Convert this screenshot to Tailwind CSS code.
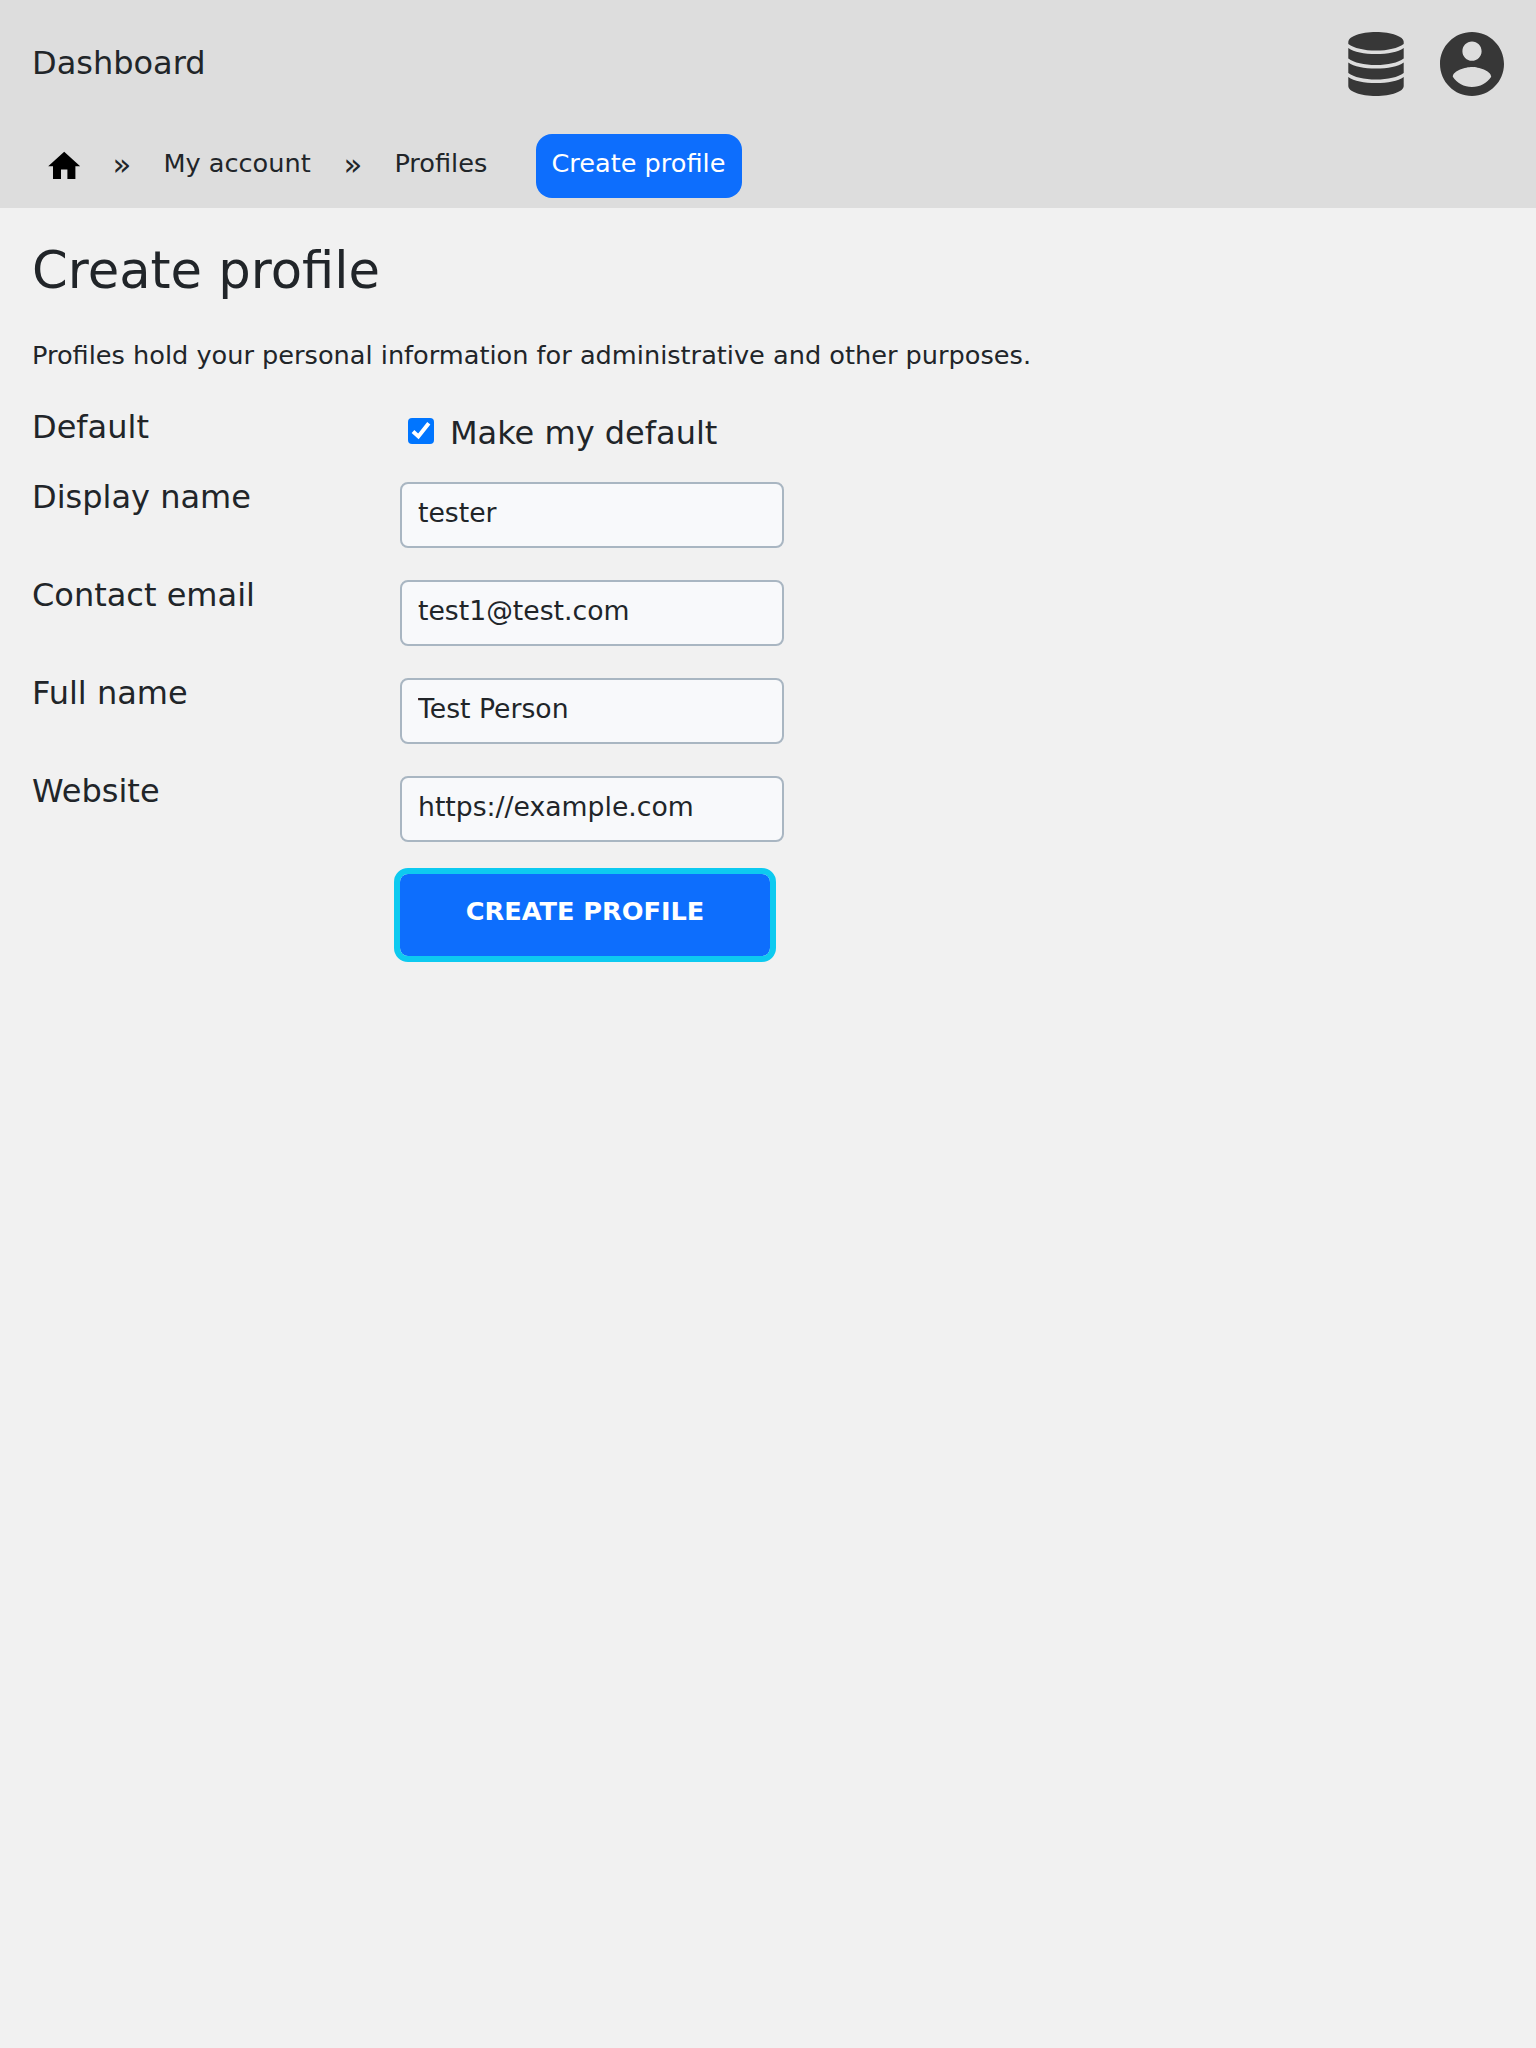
<!DOCTYPE html>
<html lang="en">
<head>
<meta charset="utf-8">
<title>Create profile</title>
<script src="https://cdn.jsdelivr.net/npm/@tailwindcss/browser@4"></script>
</head>
<body class="min-h-screen bg-[#f1f1f1] text-[#212529] font-['DejaVu_Sans',sans-serif] text-[32px] leading-[48px]">
<header class="bg-[#ddd] h-[208px]">
  <div class="flex items-center justify-between px-8 h-32">
    <a class="pb-0.5">Dashboard</a>
    <div class="flex gap-9">
      <svg class="w-14 h-16" viewBox="0 0 56 64" fill="#373737"><path d="M.3 10C.3 4.500 12.500 0 28 0s27.700 4.500 27.700 10v2C50 16.200 40 18.600 28 18.600S6 16.200.3 12z"/><path d="M.3 16C6 20 16 22 28 22s22-2 27.700-6v10.500C50 30.700 40 33 28 33S6 30.700.3 26.500z"/><path d="M.3 30.500C6 34.500 16 36.500 28 36.500s22-2 27.700-6V41C50 45.200 40 47.500 28 47.500S6 45.200.3 41z"/><path d="M.3 45C6 49 16 51 28 51s22-2 27.700-6v9c0 5.500-12.200 10-27.700 10S.3 59.500.3 54z"/></svg>
      <svg class="w-16 h-16" viewBox="2 2 20 20" fill="#373737"><path d="M12 2C6.480 2 2 6.480 2 12s4.480 10 10 10 10-4.480 10-10S17.520 2 12 2zm0 3c1.660 0 3 1.340 3 3s-1.340 3-3 3-3-1.340-3-3 1.340-3 3-3zm0 14.200c-2.500 0-4.710-1.280-6-3.220.03-1.990 4-3.080 6-3.080 1.990 0 5.970 1.090 6 3.080-1.290 1.940-3.500 3.220-6 3.220z"/></svg>
    </div>
  </div>
  <nav class="flex items-start pt-1.5 pl-[45px] text-[25.6px] leading-[38px]">
    <svg class="mt-[13px] w-[38.4px] h-[38.4px]" viewBox="0 0 24 24"><path d="M10 20v-6h4v6h5v-8h3L12 3 2 12h3v8z"/></svg>
    <span class="mt-3 ml-[29px] w-[51px] text-[30.700px]">»</span>
    <a class="mt-2.5 w-[180px]">My account</a>
    <span class="mt-3 w-[51px] text-[30.700px]">»</span>
    <a class="mt-2.5 w-[142px]">Profiles</a>
    <a class="h-16 w-[206px] rounded-2xl bg-[#0d6efd] px-[15px] pt-2.5 text-white whitespace-nowrap">Create profile</a>
  </nav>
</header>
<main class="px-8 pt-[31px]">
  <h1 class="text-[51.2px] leading-[62px]">Create profile</h1>
  <p class="mt-[35px] text-[25.6px] leading-[38px]">Profiles hold your personal information for administrative and other purposes.</p>
  <form class="mt-7 grid grid-cols-[368px_384px]">
    <label class="h-[80px] pt-px">Default</label>
    <label class="flex h-[80px] pl-2 pt-[7px]">
      <span class="mt-[9px] mr-4 grid size-[26px]">
        <input type="checkbox" checked class="col-start-1 row-start-1 size-[26px] appearance-none rounded bg-[#0075ff]">
        <svg class="pointer-events-none col-start-1 row-start-1 size-[26px]" viewBox="0 0 26 26" fill="none" stroke="#fff" stroke-width="4"><path d="M5 13.500l5.400 4.900L20.800 5.200"/></svg>
      </span>Make my default</label>
    <label class="-mt-[9px]">Display name</label>
    <input class="mb-8 h-[66px] w-96 rounded-lg border-2 border-[#a9b6c2] bg-[#f8f9fb] px-4 pb-1.5 text-[26.667px]" value="tester">
    <label class="-mt-[9px]">Contact email</label>
    <input class="mb-8 h-[66px] w-96 rounded-lg border-2 border-[#a9b6c2] bg-[#f8f9fb] px-4 pb-1.5 text-[26.667px]" value="test1@test.com">
    <label class="-mt-[9px]">Full name</label>
    <input class="mb-8 h-[66px] w-96 rounded-lg border-2 border-[#a9b6c2] bg-[#f8f9fb] px-4 pb-1.5 text-[26.667px]" value="Test Person">
    <label class="-mt-[9px]">Website</label>
    <input class="mb-8 h-[66px] w-96 rounded-lg border-2 border-[#a9b6c2] bg-[#f8f9fb] px-4 pb-1.5 text-[26.667px]" value="https://example.com">
    <button class="col-start-2 h-[82px] w-[370px] rounded-lg bg-[#0d6efd] pb-2 text-[25.6px] font-bold text-white outline-[6.400px] outline-[#0dcaf0]">CREATE PROFILE</button>
  </form>
</main>
</body>
</html>
